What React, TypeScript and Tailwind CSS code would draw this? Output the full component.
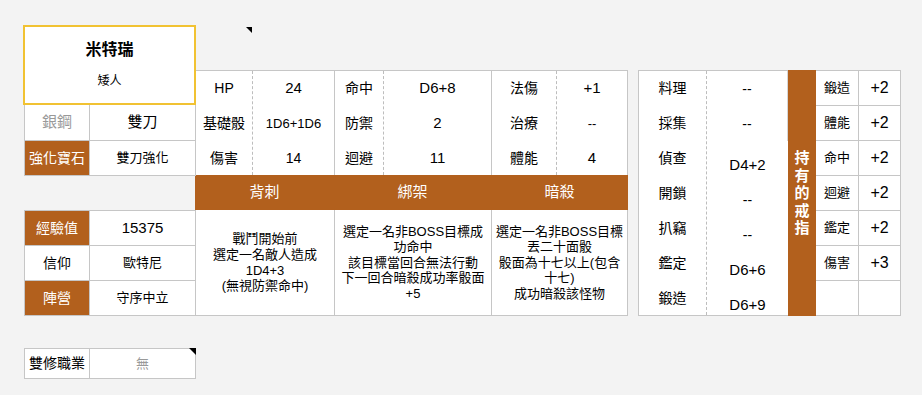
import React from "react";

type Stat = { label: string; value: string; vcls: string };

const rowH = ["h-[35px]", "h-[35px]", "h-[34px]"];

function Group({
  width,
  labelW,
  last,
  stats,
  title,
  lines,
}: {
  width: string;
  labelW: string;
  last?: boolean;
  stats: Stat[];
  title: string;
  lines: string[];
}) {
  return (
    <div className={`flex flex-col ${width}`}>
      <div
        className={`flex bg-white border-t border-l border-[#c6c6c6] ${last ? "border-r" : ""}`}
      >
        <div className={`${labelW} flex flex-col`}>
          {stats.map((s, i) => (
            <div
              key={i}
              className={`${rowH[i]} flex items-center justify-center text-[14px]`}
            >
              {s.label}
            </div>
          ))}
        </div>
        <div className="flex-1 flex flex-col border-l border-dashed border-[#bdbdbd]">
          {stats.map((s, i) => (
            <div
              key={i}
              className={`${rowH[i]} flex items-center justify-center ${s.vcls}`}
            >
              {s.value}
            </div>
          ))}
        </div>
      </div>
      <div className="h-[35px] bg-[#b2601d] text-white text-[15px] flex items-center justify-center">
        {title}
      </div>
      <div
        className={`h-[106px] bg-white border-l border-b border-[#c6c6c6] ${last ? "border-r" : ""} flex flex-col items-center justify-center text-center text-[13px] leading-[15.6px]`}
      >
        {lines.map((l, i) => (
          <div key={i}>{l}</div>
        ))}
      </div>
    </div>
  );
}

const skillRows: { label: string; value: string; h: string; pt: string; vcls: string }[] = [
  { label: "料理", value: "--", h: "h-[35px]", pt: "pt-[2px]", vcls: "text-[14px]" },
  { label: "採集", value: "--", h: "h-[35px]", pt: "pt-[2px]", vcls: "text-[14px]" },
  { label: "偵查", value: "D4+2", h: "h-[35px]", pt: "pt-[14px]", vcls: "text-[15px]" },
  { label: "開鎖", value: "--", h: "h-[35px]", pt: "pt-[14px]", vcls: "text-[14px]" },
  { label: "扒竊", value: "--", h: "h-[35px]", pt: "pt-[14px]", vcls: "text-[14px]" },
  { label: "鑑定", value: "D6+6", h: "h-[35px]", pt: "pt-[14px]", vcls: "text-[15px]" },
  { label: "鍛造", value: "D6+9", h: "h-[34px]", pt: "pt-[14px]", vcls: "text-[15px]" },
];

const ring = [
  ["鍛造", "+2"],
  ["體能", "+2"],
  ["命中", "+2"],
  ["迴避", "+2"],
  ["鑑定", "+2"],
  ["傷害", "+3"],
  ["", ""],
];

export default function App() {
  return (
    <div className="w-[922px] h-[395px] bg-[#f3f3f3] flex items-start pl-[23px] pt-[25px] text-black font-['Liberation_Sans','Noto_Sans_CJK_TC',sans-serif]">
      {/* Left column */}
      <div className="relative z-10 w-[173px] flex flex-col">
        <div className="h-[80px] border-2 border-[#f1c232] bg-white flex flex-col items-center pt-[13px]">
          <div className="text-[16px] font-bold leading-[20px]">米特瑞</div>
          <div className="text-[12px] leading-[16px] mt-[13px]">矮人</div>
        </div>
        <div className="ml-px w-[172px] border-x border-[#c6c6c6] bg-white">
          <div className="flex h-[36px] border-b border-[#c6c6c6]">
            <div className="w-[64px] flex items-center justify-center text-[15px] text-[#999999]">
              銀鋼
            </div>
            <div className="flex-1 border-l border-[#c6c6c6] flex items-center justify-center text-[15px]">
              雙刀
            </div>
          </div>
          <div className="flex h-[35px] border-b border-[#c6c6c6]">
            <div className="w-[64px] bg-[#b2601d] text-white flex items-center justify-center text-[14px]">
              強化寶石
            </div>
            <div className="flex-1 border-l border-[#c6c6c6] flex items-center justify-center text-[13px]">
              雙刀強化
            </div>
          </div>
        </div>

        <div className="mt-[34px] ml-px w-[172px] border-x border-t border-[#c6c6c6] bg-white">
          <div className="flex h-[35px] border-b border-[#c6c6c6]">
            <div className="w-[64px] bg-[#b2601d] text-white flex items-center justify-center text-[14px]">
              經驗值
            </div>
            <div className="flex-1 border-l border-[#c6c6c6] flex items-center justify-center text-[15px]">
              15375
            </div>
          </div>
          <div className="flex h-[35px] border-b border-[#c6c6c6]">
            <div className="w-[64px] flex items-center justify-center text-[14px]">信仰</div>
            <div className="flex-1 border-l border-[#c6c6c6] flex items-center justify-center text-[13px]">
              歐特尼
            </div>
          </div>
          <div className="flex h-[35px] border-b border-[#c6c6c6]">
            <div className="w-[64px] bg-[#b2601d] text-white flex items-center justify-center text-[14px]">
              陣營
            </div>
            <div className="flex-1 border-l border-[#c6c6c6] flex items-center justify-center text-[13px]">
              守序中立
            </div>
          </div>
        </div>

        <div className="relative mt-[32px] ml-px w-[172px] h-[31px] border border-[#c6c6c6] bg-white flex">
          <div className="w-[64px] flex items-center justify-center text-[14px]">雙修職業</div>
          <div className="flex-1 border-l border-[#c6c6c6] flex items-center justify-center text-[13px] text-[#999999]">
            無
          </div>
          <div className="absolute -top-px -right-px w-0 h-0 border-l-[7px] border-l-transparent border-t-[7px] border-t-black" />
        </div>
      </div>

      {/* Middle column */}
      <div className="-ml-px flex flex-col">
        <div className="relative h-[45px]">
          <div className="absolute left-[51px] top-[2px] w-0 h-0 border-l-[6px] border-l-transparent border-t-[6px] border-t-black" />
        </div>
        <div className="flex">
          <Group
            width="w-[139px]"
            labelW="w-[56px]"
            stats={[
              { label: "HP", value: "24", vcls: "text-[15px]" },
              { label: "基礎骰", value: "1D6+1D6", vcls: "text-[13px]" },
              { label: "傷害", value: "14", vcls: "text-[14px]" },
            ]}
            title="背刺"
            lines={["戰鬥開始前", "選定一名敵人造成", "1D4+3", "(無視防禦命中)"]}
          />
          <Group
            width="w-[157px]"
            labelW="w-[48px]"
            stats={[
              { label: "命中", value: "D6+8", vcls: "text-[15px]" },
              { label: "防禦", value: "2", vcls: "text-[15px]" },
              { label: "迴避", value: "11", vcls: "text-[15px]" },
            ]}
            title="綁架"
            lines={[
              "選定一名非BOSS目標成",
              "功命中",
              "該目標當回合無法行動",
              "下一回合暗殺成功率骰面",
              "+5",
            ]}
          />
          <Group
            width="w-[137px]"
            labelW="w-[64px]"
            last
            stats={[
              { label: "法傷", value: "+1", vcls: "text-[15px]" },
              { label: "治療", value: "--", vcls: "text-[13px]" },
              { label: "體能", value: "4", vcls: "text-[15px]" },
            ]}
            title="暗殺"
            lines={[
              "選定一名非BOSS目標",
              "丟二十面骰",
              "骰面為十七以上(包含",
              "十七)",
              "成功暗殺該怪物",
            ]}
          />
        </div>
      </div>

      {/* Right panel */}
      <div className="ml-[10px] mt-[45px] flex h-[246px]">
        <div className="w-[150px] flex bg-white border-l border-t border-b border-[#c6c6c6]">
          <div className="w-[67px] flex flex-col">
            {skillRows.map((r, i) => (
              <div key={i} className={`${r.h} flex items-center justify-center text-[14px]`}>
                {r.label}
              </div>
            ))}
          </div>
          <div className="flex-1 flex flex-col border-l border-dashed border-[#bdbdbd]">
            {skillRows.map((r, i) => (
              <div
                key={i}
                className={`${r.h} ${r.pt} flex items-center justify-center ${r.vcls} ${i < 2 ? "border-r border-[#d6d6d6]" : ""}`}
              >
                {r.value}
              </div>
            ))}
          </div>
        </div>
        <div className="w-[28px] bg-[#b2601d] flex items-center justify-center">
          <div className="w-[16px] text-center text-white font-bold text-[15px] leading-[17.5px]">
            持有的戒指
          </div>
        </div>
        <div className="w-[85px] flex flex-col bg-white border-t border-r border-[#c6c6c6]">
          {ring.map(([l, v], i) => (
            <div key={i} className="h-[35px] flex border-b border-[#c6c6c6]">
              <div className="w-[43px] border-r border-[#c6c6c6] flex items-center justify-center text-[13px]">
                {l}
              </div>
              <div className="flex-1 flex items-center justify-center text-[16px]">{v}</div>
            </div>
          ))}
        </div>
      </div>
    </div>
  );
}
